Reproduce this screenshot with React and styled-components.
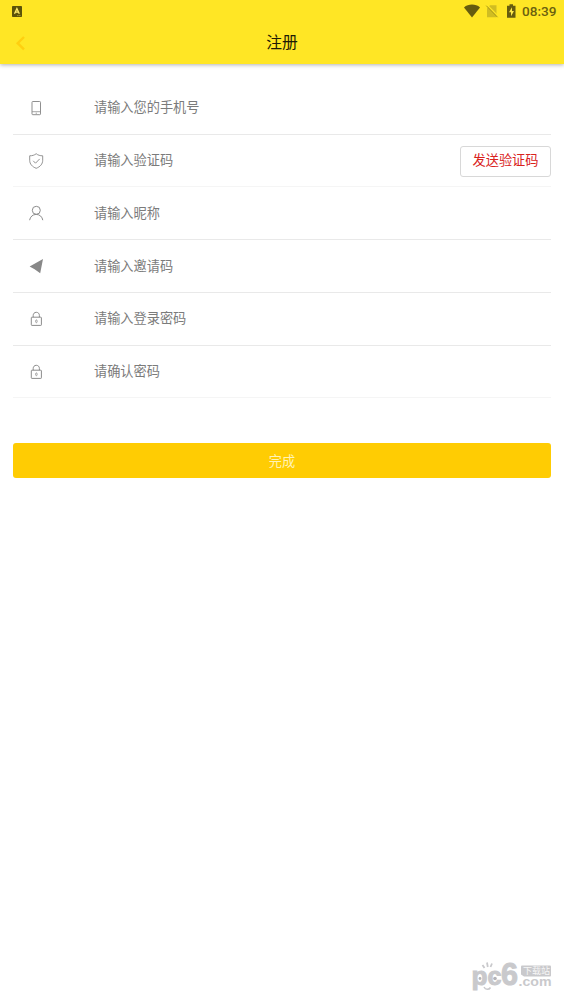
import React, { useState } from "react";
import styled, { createGlobalStyle } from "styled-components";

const GlobalStyle = createGlobalStyle`
  * {
    box-sizing: border-box;
  }

  body {
    margin: 0;
    background-color: #ffffff;
    font-family: "Noto Sans CJK SC", sans-serif;
  }
`;

// Styled Components
const Page = styled.div`
  position: relative;
  display: flex;
  flex-direction: column;
  height: 1002px;
  background-color: #ffffff;
`;

const Header = styled.header`
  height: 64px;
  flex: none;
  background-color: #ffe625;
  box-shadow: 0 1px 4px rgba(0, 0, 0, 0.3);
`;

const StatusBar = styled.div`
  display: flex;
  justify-content: space-between;
  height: 22px;
  padding: 0 7px 0 12px;
  color: #6b610f;

  svg {
    display: block;
  }
`;

const StatusLeft = styled.div`
  padding-top: 6px;
`;

const StatusGroup = styled.div`
  display: flex;
  padding-top: 4px;
`;

const Clock = styled.span`
  width: 35px;
  margin-left: 5px;
  font-family: Roboto, sans-serif;
  font-size: 13.6px;
  font-weight: 500;
  line-height: 15px;
  white-space: nowrap;
`;

const TitleBar = styled.div`
  display: grid;
  grid-template-columns: 40px 1fr 40px;
  align-items: center;
  height: 42px;
`;

const BackButton = styled.button`
  display: flex;
  padding: 0 0 0 15px;
  border: none;
  background: none;
  cursor: pointer;
`;

const Title = styled.h1`
  margin: 0;
  padding-bottom: 2px;
  color: #1d1a05;
  font-size: 15.8px;
  font-weight: 400;
  line-height: 24px;
  text-align: center;
`;

const Form = styled.form`
  padding: 17.75px 13px 0;
`;

const Row = styled.div`
  display: flex;
  align-items: center;
  height: 52.75px;
  border-bottom: 1px solid ${(props) => (props.$faint ? "#f5f5f5" : "#e9e9e9")};
`;

const IconCell = styled.div`
  display: flex;
  flex: none;
  width: 16px;
  margin: 0.5px 50px 0 15px;
`;

const Input = styled.input`
  flex: 1;
  min-width: 0;
  height: 30px;
  padding: 0 0 1.5px;
  border: none;
  outline: none;
  background: transparent;
  color: #333333;
  font-family: inherit;
  font-size: 13.2px;

  &::placeholder {
    color: #7b7b7b;
    opacity: 1;
  }
`;

const CodeButton = styled.button`
  width: 91px;
  height: 31px;
  margin-top: 2px;
  padding: 0 0 4px;
  border: 1px solid #d8d8d8;
  border-radius: 3px;
  background-color: #ffffff;
  color: #d9221c;
  font-family: inherit;
  font-size: 13.2px;
  cursor: pointer;
`;

const SubmitButton = styled.button`
  display: block;
  width: 100%;
  height: 35px;
  margin-top: 44.75px;
  padding: 0;
  border: none;
  border-radius: 3px;
  background-color: #ffcc03;
  color: #fff3b8;
  font-family: inherit;
  font-size: 13.2px;
  cursor: pointer;
`;

const Watermark = styled.div`
  position: absolute;
  right: 12px;
  bottom: 11px;
  width: 81px;
  height: 30px;

  svg {
    display: block;
    overflow: visible;
  }
`;

// Line icons for the form rows
const PhoneIcon = () => (
  <svg width="16" height="16" viewBox="0 0 16 16" fill="none" stroke="#8f8f8f">
    <rect x="4" y="1.5" width="8.5" height="13.2" rx="0.8" />
    <path d="M4 11.7h8.5" strokeWidth="0.8" />
    <path d="M7.7 13.2h1.2" strokeWidth="0.9" />
  </svg>
);

const ShieldIcon = () => (
  <svg width="16" height="16" viewBox="0 0 16 16" fill="none" stroke="#888888" strokeWidth="0.9">
    <path d="M8.2 0.7C6.5 2.2 4.2 2.8 1.7 2.8v4.5c0 3.8 2.6 6.5 6.5 8 3.9-1.5 6.5-4.2 6.5-8V2.8C12.2 2.8 9.9 2.2 8.2.7z" />
    <path d="M5.2 7.8l2.3 2.4 4.2-4.3" />
  </svg>
);

const UserIcon = () => (
  <svg width="16" height="16" viewBox="0 0 16 16" fill="none" stroke="#8c8c8c">
    <circle cx="8.3" cy="5.3" r="4" />
    <path d="M1.6 15.2c.6-3.500 3.100-5.800 6.600-5.800s6 2.300 6.600 5.800" />
  </svg>
);

const SendIcon = () => (
  <svg width="16" height="16" viewBox="0 0 16 16" fill="#888888">
    <path d="M15 1L1.6 8.4l5 2.8 5.6 4z" />
  </svg>
);

const LockIcon = () => (
  <svg width="16" height="16" viewBox="0 0 16 16" fill="none" stroke="#8c8c8c">
    <rect x="3.3" y="6.2" width="10.1" height="8.2" rx="0.6" />
    <path d="M5.2 6.2V4.5c0-1.9 1.2-3.2 3.1-3.2s3.1 1.3 3.1 3.2v1.7" />
    <ellipse cx="8.4" cy="10.3" rx="0.8" ry="1.4" strokeWidth="0.8" />
  </svg>
);

const fields = [
  { name: "phone", placeholder: "请输入您的手机号", icon: PhoneIcon },
  { name: "code", placeholder: "请输入验证码", icon: ShieldIcon, faint: true, hasCode: true },
  { name: "nickname", placeholder: "请输入昵称", icon: UserIcon },
  { name: "invite", placeholder: "请输入邀请码", icon: SendIcon },
  { name: "password", placeholder: "请输入登录密码", icon: LockIcon, type: "password" },
  { name: "confirm", placeholder: "请确认密码", icon: LockIcon, type: "password", faint: true },
];

const App = () => {
  const [values, setValues] = useState({});

  const handleChange = (e) => {
    const { name, value } = e.target;
    setValues((prev) => ({ ...prev, [name]: value }));
  };

  return (
    <Page>
      <GlobalStyle />
      <Header>
        <StatusBar>
          <StatusLeft>
            <svg width="10" height="11" viewBox="0 0 10 11">
              <rect width="10" height="11" rx="0.8" fill="#5c5309" />
              <path d="M2.5 7.7L4.9 2.6l2.4 5.1M3.5 6.2h2.8" fill="none" stroke="#ffec6a" strokeWidth="1.3" />
              <path d="M5.4 9.6h1M7.4 9.6h1" stroke="#e6d444" strokeWidth="0.8" />
            </svg>
          </StatusLeft>
          <StatusGroup>
            {/* wifi, no sim, battery */}
            <svg width="53" height="16" viewBox="0 0 53 16">
              <path d="M0 3.5C2.2 1.5 5 .6 8 .6s5.8.9 8 2.9L8 13.500z" fill="#665c0f" />
              <path d="M26 1.2h6.500v12H23V4.200z" fill="#d0bd22" />
              <path d="M23.300 1.300L34 12" stroke="#ffe625" strokeWidth="1.300" />
              <path d="M22.300 1.700L33.500 13.200" stroke="#a89819" strokeWidth="1" />
              <path d="M45.500 .3h3.500v1.500h2.500v12H43V1.800h2.500z" fill="#665c0f" />
              <path d="M48 3.200l-3 5h2v4l3-5.300h-2z" fill="#ffe94a" />
            </svg>
            <Clock>08:39</Clock>
          </StatusGroup>
        </StatusBar>
        <TitleBar>
          <BackButton type="button" aria-label="返回">
            <svg width="11" height="16" viewBox="0 0 11 16" fill="none" stroke="#ffcf10" strokeWidth="2.4">
              <path d="M9 2L2.7 8.2 9 14.3" />
            </svg>
          </BackButton>
          <Title>注册</Title>
        </TitleBar>
      </Header>

      <Form onSubmit={(e) => e.preventDefault()}>
        {fields.map((field) => {
          const Icon = field.icon;
          return (
            <Row key={field.name} $faint={field.faint}>
              <IconCell>
                <Icon />
              </IconCell>
              <Input
                type={field.type || "text"}
                name={field.name}
                placeholder={field.placeholder}
                value={values[field.name] || ""}
                onChange={handleChange}
              />
              {field.hasCode && <CodeButton type="button">发送验证码</CodeButton>}
            </Row>
          );
        })}
        <SubmitButton type="submit">完成</SubmitButton>
      </Form>

      <Watermark>
        <svg width="81" height="30" viewBox="0 0 81 30">
          <g fontFamily="Liberation Sans, sans-serif" fontWeight="700" fill="#c9c9cc" stroke="#c9c9cc">
            <text x="0.5" y="24" fontSize="26" strokeWidth="1" textLength="16" lengthAdjust="spacingAndGlyphs">p</text>
            <text x="16.5" y="24" fontSize="26" strokeWidth="1" textLength="14" lengthAdjust="spacingAndGlyphs">c</text>
            <text x="30" y="24" fontSize="32" strokeWidth="1" textLength="17" lengthAdjust="spacingAndGlyphs">6</text>
            <text x="47.500" y="25" fontSize="13" stroke="none" textLength="33" lengthAdjust="spacingAndGlyphs">.com</text>
          </g>
          {/* the face around the letters */}
          <path d="M11.5 4l2 3M16 1.5l.8 4.500M21 2.500l-1.500 3.500" stroke="#c9c9cc" strokeWidth="1.800" />
          <path d="M13 26c1.500 3 5 3 6.500.5" fill="none" stroke="#c9c9cc" strokeWidth="1.500" />
          <circle cx="9" cy="17.500" r="1.400" fill="#b4b4b8" />
          <circle cx="24" cy="17.500" r="1.800" fill="#b4b4b8" />
          <path d="M51 4.500h28q1 0 1 1v9q0 1-1 1H53l-3-2V5.500q0-1 1-1z" fill="#c9c9cc" />
          <text x="52" y="13.300" fontFamily="Noto Sans CJK SC, sans-serif" fontSize="9" fill="#f6f6f6" textLength="27">下载站</text>
        </svg>
      </Watermark>
    </Page>
  );
};

export default App;
